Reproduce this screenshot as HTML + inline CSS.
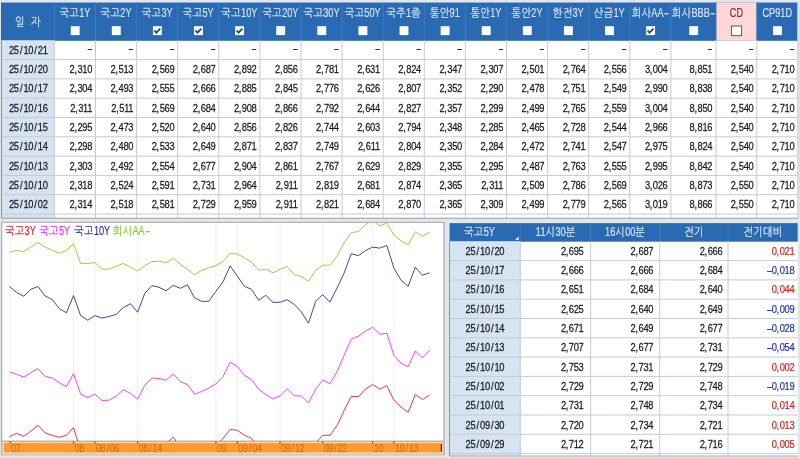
<!DOCTYPE html>
<html lang="ko"><head><meta charset="utf-8"><title>금리 추이</title>
<style>
html,body{margin:0;padding:0;background:#e3e5e8;overflow:hidden}
body{width:800px;height:458px}
svg{display:block;font-family:"Liberation Sans", "NanumGothic", "Noto Sans CJK KR", sans-serif;will-change:transform}
.h{font-size:11.6px;fill:#d4e3f6;stroke:#d4e3f6;stroke-width:.2px;text-anchor:middle;letter-spacing:0.3px}
.hcd{font-size:11.6px;fill:#6e3b3b;text-anchor:middle;letter-spacing:0.3px}
.d{font-size:11.7px;fill:#1a1a1a;stroke:#1a1a1a;stroke-width:.25px;text-anchor:middle;letter-spacing:-0.4px}
.n{font-size:11.7px;fill:#1a1a1a;stroke:#1a1a1a;stroke-width:.25px;text-anchor:end;letter-spacing:-0.4px}
.nr{font-size:11.7px;fill:#c8201c;stroke:#c8201c;stroke-width:.2px;text-anchor:end;letter-spacing:-0.4px}
.nb{font-size:11.7px;fill:#1c2ea8;stroke:#1c2ea8;stroke-width:.2px;text-anchor:end;letter-spacing:-0.4px}
.lt{letter-spacing:0;font-size:12.4px}
.hcd{stroke:#6e3b3b;stroke-width:.2px}
.lg{font-size:11.6px;letter-spacing:0.3px}
.lg tspan{stroke-width:.15px}
.ax{font-size:11.3px;fill:#c8700f;letter-spacing:-0.4px}
</style></head><body>
<svg width="800" height="458" viewBox="0 0 800 458">
<rect x="0.00" y="0.00" width="800.00" height="458.00" fill="#e3e5e8" />
<rect x="1.00" y="2.50" width="799.00" height="215.70" fill="#dde0e9" />
<rect x="1.00" y="2.50" width="796.70" height="215.70" fill="#ffffff" />
<rect x="1.00" y="2.50" width="796.70" height="38.30" fill="#2a6ab2" />
<rect x="716.00" y="2.50" width="40.80" height="38.30" fill="#ffd7d7" />
<rect x="1.00" y="40.30" width="53.40" height="177.90" fill="#d6e3f0" />
<line x1="54.40" y1="2.50" x2="54.40" y2="40.30" stroke="#3d79bd" stroke-width="1" />
<line x1="95.50" y1="2.50" x2="95.50" y2="40.30" stroke="#3d79bd" stroke-width="1" />
<line x1="136.60" y1="2.50" x2="136.60" y2="40.30" stroke="#3d79bd" stroke-width="1" />
<line x1="177.70" y1="2.50" x2="177.70" y2="40.30" stroke="#3d79bd" stroke-width="1" />
<line x1="218.80" y1="2.50" x2="218.80" y2="40.30" stroke="#3d79bd" stroke-width="1" />
<line x1="259.90" y1="2.50" x2="259.90" y2="40.30" stroke="#3d79bd" stroke-width="1" />
<line x1="301.00" y1="2.50" x2="301.00" y2="40.30" stroke="#3d79bd" stroke-width="1" />
<line x1="342.10" y1="2.50" x2="342.10" y2="40.30" stroke="#3d79bd" stroke-width="1" />
<line x1="383.20" y1="2.50" x2="383.20" y2="40.30" stroke="#3d79bd" stroke-width="1" />
<line x1="424.30" y1="2.50" x2="424.30" y2="40.30" stroke="#3d79bd" stroke-width="1" />
<line x1="465.40" y1="2.50" x2="465.40" y2="40.30" stroke="#3d79bd" stroke-width="1" />
<line x1="506.50" y1="2.50" x2="506.50" y2="40.30" stroke="#3d79bd" stroke-width="1" />
<line x1="547.60" y1="2.50" x2="547.60" y2="40.30" stroke="#3d79bd" stroke-width="1" />
<line x1="588.70" y1="2.50" x2="588.70" y2="40.30" stroke="#3d79bd" stroke-width="1" />
<line x1="629.80" y1="2.50" x2="629.80" y2="40.30" stroke="#3d79bd" stroke-width="1" />
<line x1="670.90" y1="2.50" x2="670.90" y2="40.30" stroke="#3d79bd" stroke-width="1" />
<line x1="716.00" y1="2.50" x2="716.00" y2="40.30" stroke="#3d79bd" stroke-width="1" />
<line x1="756.80" y1="2.50" x2="756.80" y2="40.30" stroke="#3d79bd" stroke-width="1" />
<line x1="54.40" y1="40.30" x2="54.40" y2="218.20" stroke="#c2ccd8" stroke-width="1" />
<line x1="95.50" y1="40.30" x2="95.50" y2="218.20" stroke="#c2ccd8" stroke-width="1" />
<line x1="136.60" y1="40.30" x2="136.60" y2="218.20" stroke="#c2ccd8" stroke-width="1" />
<line x1="177.70" y1="40.30" x2="177.70" y2="218.20" stroke="#c2ccd8" stroke-width="1" />
<line x1="218.80" y1="40.30" x2="218.80" y2="218.20" stroke="#c2ccd8" stroke-width="1" />
<line x1="259.90" y1="40.30" x2="259.90" y2="218.20" stroke="#c2ccd8" stroke-width="1" />
<line x1="301.00" y1="40.30" x2="301.00" y2="218.20" stroke="#c2ccd8" stroke-width="1" />
<line x1="342.10" y1="40.30" x2="342.10" y2="218.20" stroke="#c2ccd8" stroke-width="1" />
<line x1="383.20" y1="40.30" x2="383.20" y2="218.20" stroke="#c2ccd8" stroke-width="1" />
<line x1="424.30" y1="40.30" x2="424.30" y2="218.20" stroke="#c2ccd8" stroke-width="1" />
<line x1="465.40" y1="40.30" x2="465.40" y2="218.20" stroke="#c2ccd8" stroke-width="1" />
<line x1="506.50" y1="40.30" x2="506.50" y2="218.20" stroke="#c2ccd8" stroke-width="1" />
<line x1="547.60" y1="40.30" x2="547.60" y2="218.20" stroke="#c2ccd8" stroke-width="1" />
<line x1="588.70" y1="40.30" x2="588.70" y2="218.20" stroke="#c2ccd8" stroke-width="1" />
<line x1="629.80" y1="40.30" x2="629.80" y2="218.20" stroke="#c2ccd8" stroke-width="1" />
<line x1="670.90" y1="40.30" x2="670.90" y2="218.20" stroke="#c2ccd8" stroke-width="1" />
<line x1="716.00" y1="40.30" x2="716.00" y2="218.20" stroke="#c2ccd8" stroke-width="1" />
<line x1="756.80" y1="40.30" x2="756.80" y2="218.20" stroke="#c2ccd8" stroke-width="1" />
<line x1="1.00" y1="59.60" x2="797.70" y2="59.60" stroke="#c2ccd8" stroke-width="1" />
<line x1="1.00" y1="78.90" x2="797.70" y2="78.90" stroke="#c2ccd8" stroke-width="1" />
<line x1="1.00" y1="98.20" x2="797.70" y2="98.20" stroke="#c2ccd8" stroke-width="1" />
<line x1="1.00" y1="117.50" x2="797.70" y2="117.50" stroke="#c2ccd8" stroke-width="1" />
<line x1="1.00" y1="136.80" x2="797.70" y2="136.80" stroke="#c2ccd8" stroke-width="1" />
<line x1="1.00" y1="156.10" x2="797.70" y2="156.10" stroke="#c2ccd8" stroke-width="1" />
<line x1="1.00" y1="175.40" x2="797.70" y2="175.40" stroke="#c2ccd8" stroke-width="1" />
<line x1="1.00" y1="194.70" x2="797.70" y2="194.70" stroke="#c2ccd8" stroke-width="1" />
<line x1="1.00" y1="214.00" x2="797.70" y2="214.00" stroke="#c2ccd8" stroke-width="1" />
<line x1="1.00" y1="218.20" x2="797.70" y2="218.20" stroke="#98a0aa" stroke-width="1" />
<line x1="1.50" y1="40.30" x2="1.50" y2="218.20" stroke="#8c949e" stroke-width="1" />
<line x1="797.70" y1="2.50" x2="797.70" y2="218.20" stroke="#c9d3df" stroke-width="1" />
<text transform="translate(28.00 25.60) scale(0.88 1)" class="h">일&#160;&#160;자</text>
<text transform="translate(74.95 16.70) scale(0.88 1)" class="h">국고<tspan class="lt" textLength="12.74" lengthAdjust="spacingAndGlyphs">1Y</tspan></text>
<rect x="70.75" y="26.20" width="8.90" height="8.90" fill="#ffffff" />
<text transform="translate(116.05 16.70) scale(0.88 1)" class="h">국고<tspan class="lt" textLength="12.74" lengthAdjust="spacingAndGlyphs">2Y</tspan></text>
<rect x="111.85" y="26.20" width="8.90" height="8.90" fill="#ffffff" />
<text transform="translate(157.15 16.70) scale(0.88 1)" class="h">국고<tspan class="lt" textLength="12.74" lengthAdjust="spacingAndGlyphs">3Y</tspan></text>
<rect x="152.95" y="26.20" width="8.90" height="8.90" fill="#ffffff" />
<path d="M154.35 30.50 L156.35 32.60 L160.25 28.60" fill="none" stroke="#2a4373" stroke-width="1.8"/>
<text transform="translate(198.25 16.70) scale(0.88 1)" class="h">국고<tspan class="lt" textLength="12.74" lengthAdjust="spacingAndGlyphs">5Y</tspan></text>
<rect x="194.05" y="26.20" width="8.90" height="8.90" fill="#ffffff" />
<path d="M195.45 30.50 L197.45 32.60 L201.35 28.60" fill="none" stroke="#2a4373" stroke-width="1.8"/>
<text transform="translate(239.35 16.70) scale(0.88 1)" class="h">국고<tspan class="lt" textLength="18.53" lengthAdjust="spacingAndGlyphs">10Y</tspan></text>
<rect x="235.15" y="26.20" width="8.90" height="8.90" fill="#ffffff" />
<path d="M236.55 30.50 L238.55 32.60 L242.45 28.60" fill="none" stroke="#2a4373" stroke-width="1.8"/>
<text transform="translate(280.45 16.70) scale(0.88 1)" class="h">국고<tspan class="lt" textLength="18.53" lengthAdjust="spacingAndGlyphs">20Y</tspan></text>
<rect x="276.25" y="26.20" width="8.90" height="8.90" fill="#ffffff" />
<text transform="translate(321.55 16.70) scale(0.88 1)" class="h">국고<tspan class="lt" textLength="18.53" lengthAdjust="spacingAndGlyphs">30Y</tspan></text>
<rect x="317.35" y="26.20" width="8.90" height="8.90" fill="#ffffff" />
<text transform="translate(362.65 16.70) scale(0.88 1)" class="h">국고<tspan class="lt" textLength="18.53" lengthAdjust="spacingAndGlyphs">50Y</tspan></text>
<rect x="358.45" y="26.20" width="8.90" height="8.90" fill="#ffffff" />
<text transform="translate(403.75 16.70) scale(0.88 1)" class="h">국주<tspan class="lt" textLength="5.79" lengthAdjust="spacingAndGlyphs">1</tspan>종</text>
<rect x="399.55" y="26.20" width="8.90" height="8.90" fill="#ffffff" />
<text transform="translate(444.85 16.70) scale(0.88 1)" class="h">통안<tspan class="lt" textLength="11.58" lengthAdjust="spacingAndGlyphs">91</tspan></text>
<rect x="440.65" y="26.20" width="8.90" height="8.90" fill="#ffffff" />
<text transform="translate(485.95 16.70) scale(0.88 1)" class="h">통안<tspan class="lt" textLength="12.74" lengthAdjust="spacingAndGlyphs">1Y</tspan></text>
<rect x="481.75" y="26.20" width="8.90" height="8.90" fill="#ffffff" />
<text transform="translate(527.05 16.70) scale(0.88 1)" class="h">통안<tspan class="lt" textLength="12.74" lengthAdjust="spacingAndGlyphs">2Y</tspan></text>
<rect x="522.85" y="26.20" width="8.90" height="8.90" fill="#ffffff" />
<text transform="translate(568.15 16.70) scale(0.88 1)" class="h">한전<tspan class="lt" textLength="12.74" lengthAdjust="spacingAndGlyphs">3Y</tspan></text>
<rect x="563.95" y="26.20" width="8.90" height="8.90" fill="#ffffff" />
<text transform="translate(609.25 16.70) scale(0.88 1)" class="h">산금<tspan class="lt" textLength="12.74" lengthAdjust="spacingAndGlyphs">1Y</tspan></text>
<rect x="605.05" y="26.20" width="8.90" height="8.90" fill="#ffffff" />
<text transform="translate(650.35 16.70) scale(0.88 1)" class="h">회사<tspan class="lt" textLength="13.89" lengthAdjust="spacingAndGlyphs">AA</tspan><tspan class="lt" dx="0.6" textLength="5.6" lengthAdjust="spacingAndGlyphs">-</tspan></text>
<rect x="646.15" y="26.20" width="8.90" height="8.90" fill="#ffffff" />
<path d="M647.55 30.50 L649.55 32.60 L653.45 28.60" fill="none" stroke="#2a4373" stroke-width="1.8"/>
<text transform="translate(693.45 16.70) scale(0.88 1)" class="h">회사<tspan class="lt" textLength="20.84" lengthAdjust="spacingAndGlyphs">BBB</tspan><tspan class="lt" dx="0.6" textLength="5.6" lengthAdjust="spacingAndGlyphs">-</tspan></text>
<rect x="689.25" y="26.20" width="8.90" height="8.90" fill="#ffffff" />
<text transform="translate(736.40 16.70) scale(0.88 1)" class="hcd"><tspan class="lt" textLength="15.04" lengthAdjust="spacingAndGlyphs">CD</tspan></text>
<rect x="731.50" y="26.00" width="10.00" height="9.60" fill="#ffffff" stroke="#56657c" stroke-width="1.1"/>
<text transform="translate(777.25 16.70) scale(0.88 1)" class="h"><tspan class="lt" textLength="33.57" lengthAdjust="spacingAndGlyphs">CP91D</tspan></text>
<rect x="773.05" y="26.20" width="8.90" height="8.90" fill="#ffffff" />
<text transform="translate(28.30 53.80) scale(0.8 1)" class="d">25<tspan dx="1.5">/</tspan><tspan dx="1.5">10</tspan><tspan dx="1.5">/</tspan><tspan dx="1.5">21</tspan></text>
<text transform="translate(91.90 51.80) scale(1.35 1)" class="n">-</text>
<text transform="translate(133.00 51.80) scale(1.35 1)" class="n">-</text>
<text transform="translate(174.10 51.80) scale(1.35 1)" class="n">-</text>
<text transform="translate(215.20 51.80) scale(1.35 1)" class="n">-</text>
<text transform="translate(256.30 51.80) scale(1.35 1)" class="n">-</text>
<text transform="translate(297.40 51.80) scale(1.35 1)" class="n">-</text>
<text transform="translate(338.50 51.80) scale(1.35 1)" class="n">-</text>
<text transform="translate(379.60 51.80) scale(1.35 1)" class="n">-</text>
<text transform="translate(420.70 51.80) scale(1.35 1)" class="n">-</text>
<text transform="translate(461.80 51.80) scale(1.35 1)" class="n">-</text>
<text transform="translate(502.90 51.80) scale(1.35 1)" class="n">-</text>
<text transform="translate(544.00 51.80) scale(1.35 1)" class="n">-</text>
<text transform="translate(585.10 51.80) scale(1.35 1)" class="n">-</text>
<text transform="translate(626.20 51.80) scale(1.35 1)" class="n">-</text>
<text transform="translate(667.30 51.80) scale(1.35 1)" class="n">-</text>
<text transform="translate(712.00 51.80) scale(1.35 1)" class="n">-</text>
<text transform="translate(753.20 51.80) scale(1.35 1)" class="n">-</text>
<text transform="translate(794.10 51.80) scale(1.35 1)" class="n">-</text>
<text transform="translate(28.30 73.10) scale(0.8 1)" class="d">25<tspan dx="1.5">/</tspan><tspan dx="1.5">10</tspan><tspan dx="1.5">/</tspan><tspan dx="1.5">20</tspan></text>
<text transform="translate(92.10 73.10) scale(0.8 1)" class="n">2,<tspan dx="1.0">310</tspan></text>
<text transform="translate(133.20 73.10) scale(0.8 1)" class="n">2,<tspan dx="1.0">513</tspan></text>
<text transform="translate(174.30 73.10) scale(0.8 1)" class="n">2,<tspan dx="1.0">569</tspan></text>
<text transform="translate(215.40 73.10) scale(0.8 1)" class="n">2,<tspan dx="1.0">687</tspan></text>
<text transform="translate(256.50 73.10) scale(0.8 1)" class="n">2,<tspan dx="1.0">892</tspan></text>
<text transform="translate(297.60 73.10) scale(0.8 1)" class="n">2,<tspan dx="1.0">856</tspan></text>
<text transform="translate(338.70 73.10) scale(0.8 1)" class="n">2,<tspan dx="1.0">781</tspan></text>
<text transform="translate(379.80 73.10) scale(0.8 1)" class="n">2,<tspan dx="1.0">631</tspan></text>
<text transform="translate(420.90 73.10) scale(0.8 1)" class="n">2,<tspan dx="1.0">824</tspan></text>
<text transform="translate(462.00 73.10) scale(0.8 1)" class="n">2,<tspan dx="1.0">347</tspan></text>
<text transform="translate(503.10 73.10) scale(0.8 1)" class="n">2,<tspan dx="1.0">307</tspan></text>
<text transform="translate(544.20 73.10) scale(0.8 1)" class="n">2,<tspan dx="1.0">501</tspan></text>
<text transform="translate(585.30 73.10) scale(0.8 1)" class="n">2,<tspan dx="1.0">764</tspan></text>
<text transform="translate(626.40 73.10) scale(0.8 1)" class="n">2,<tspan dx="1.0">556</tspan></text>
<text transform="translate(667.50 73.10) scale(0.8 1)" class="n">3,<tspan dx="1.0">004</tspan></text>
<text transform="translate(712.20 73.10) scale(0.8 1)" class="n">8,<tspan dx="1.0">851</tspan></text>
<text transform="translate(753.40 73.10) scale(0.8 1)" class="n">2,<tspan dx="1.0">540</tspan></text>
<text transform="translate(794.30 73.10) scale(0.8 1)" class="n">2,<tspan dx="1.0">710</tspan></text>
<text transform="translate(28.30 92.40) scale(0.8 1)" class="d">25<tspan dx="1.5">/</tspan><tspan dx="1.5">10</tspan><tspan dx="1.5">/</tspan><tspan dx="1.5">17</tspan></text>
<text transform="translate(92.10 92.40) scale(0.8 1)" class="n">2,<tspan dx="1.0">304</tspan></text>
<text transform="translate(133.20 92.40) scale(0.8 1)" class="n">2,<tspan dx="1.0">493</tspan></text>
<text transform="translate(174.30 92.40) scale(0.8 1)" class="n">2,<tspan dx="1.0">555</tspan></text>
<text transform="translate(215.40 92.40) scale(0.8 1)" class="n">2,<tspan dx="1.0">666</tspan></text>
<text transform="translate(256.50 92.40) scale(0.8 1)" class="n">2,<tspan dx="1.0">885</tspan></text>
<text transform="translate(297.60 92.40) scale(0.8 1)" class="n">2,<tspan dx="1.0">845</tspan></text>
<text transform="translate(338.70 92.40) scale(0.8 1)" class="n">2,<tspan dx="1.0">776</tspan></text>
<text transform="translate(379.80 92.40) scale(0.8 1)" class="n">2,<tspan dx="1.0">626</tspan></text>
<text transform="translate(420.90 92.40) scale(0.8 1)" class="n">2,<tspan dx="1.0">807</tspan></text>
<text transform="translate(462.00 92.40) scale(0.8 1)" class="n">2,<tspan dx="1.0">352</tspan></text>
<text transform="translate(503.10 92.40) scale(0.8 1)" class="n">2,<tspan dx="1.0">290</tspan></text>
<text transform="translate(544.20 92.40) scale(0.8 1)" class="n">2,<tspan dx="1.0">478</tspan></text>
<text transform="translate(585.30 92.40) scale(0.8 1)" class="n">2,<tspan dx="1.0">751</tspan></text>
<text transform="translate(626.40 92.40) scale(0.8 1)" class="n">2,<tspan dx="1.0">549</tspan></text>
<text transform="translate(667.50 92.40) scale(0.8 1)" class="n">2,<tspan dx="1.0">990</tspan></text>
<text transform="translate(712.20 92.40) scale(0.8 1)" class="n">8,<tspan dx="1.0">838</tspan></text>
<text transform="translate(753.40 92.40) scale(0.8 1)" class="n">2,<tspan dx="1.0">540</tspan></text>
<text transform="translate(794.30 92.40) scale(0.8 1)" class="n">2,<tspan dx="1.0">710</tspan></text>
<text transform="translate(28.30 111.70) scale(0.8 1)" class="d">25<tspan dx="1.5">/</tspan><tspan dx="1.5">10</tspan><tspan dx="1.5">/</tspan><tspan dx="1.5">16</tspan></text>
<text transform="translate(92.10 111.70) scale(0.8 1)" class="n">2,<tspan dx="1.0">311</tspan></text>
<text transform="translate(133.20 111.70) scale(0.8 1)" class="n">2,<tspan dx="1.0">511</tspan></text>
<text transform="translate(174.30 111.70) scale(0.8 1)" class="n">2,<tspan dx="1.0">569</tspan></text>
<text transform="translate(215.40 111.70) scale(0.8 1)" class="n">2,<tspan dx="1.0">684</tspan></text>
<text transform="translate(256.50 111.70) scale(0.8 1)" class="n">2,<tspan dx="1.0">908</tspan></text>
<text transform="translate(297.60 111.70) scale(0.8 1)" class="n">2,<tspan dx="1.0">866</tspan></text>
<text transform="translate(338.70 111.70) scale(0.8 1)" class="n">2,<tspan dx="1.0">792</tspan></text>
<text transform="translate(379.80 111.70) scale(0.8 1)" class="n">2,<tspan dx="1.0">644</tspan></text>
<text transform="translate(420.90 111.70) scale(0.8 1)" class="n">2,<tspan dx="1.0">827</tspan></text>
<text transform="translate(462.00 111.70) scale(0.8 1)" class="n">2,<tspan dx="1.0">357</tspan></text>
<text transform="translate(503.10 111.70) scale(0.8 1)" class="n">2,<tspan dx="1.0">299</tspan></text>
<text transform="translate(544.20 111.70) scale(0.8 1)" class="n">2,<tspan dx="1.0">499</tspan></text>
<text transform="translate(585.30 111.70) scale(0.8 1)" class="n">2,<tspan dx="1.0">765</tspan></text>
<text transform="translate(626.40 111.70) scale(0.8 1)" class="n">2,<tspan dx="1.0">559</tspan></text>
<text transform="translate(667.50 111.70) scale(0.8 1)" class="n">3,<tspan dx="1.0">004</tspan></text>
<text transform="translate(712.20 111.70) scale(0.8 1)" class="n">8,<tspan dx="1.0">850</tspan></text>
<text transform="translate(753.40 111.70) scale(0.8 1)" class="n">2,<tspan dx="1.0">540</tspan></text>
<text transform="translate(794.30 111.70) scale(0.8 1)" class="n">2,<tspan dx="1.0">710</tspan></text>
<text transform="translate(28.30 131.00) scale(0.8 1)" class="d">25<tspan dx="1.5">/</tspan><tspan dx="1.5">10</tspan><tspan dx="1.5">/</tspan><tspan dx="1.5">15</tspan></text>
<text transform="translate(92.10 131.00) scale(0.8 1)" class="n">2,<tspan dx="1.0">295</tspan></text>
<text transform="translate(133.20 131.00) scale(0.8 1)" class="n">2,<tspan dx="1.0">473</tspan></text>
<text transform="translate(174.30 131.00) scale(0.8 1)" class="n">2,<tspan dx="1.0">520</tspan></text>
<text transform="translate(215.40 131.00) scale(0.8 1)" class="n">2,<tspan dx="1.0">640</tspan></text>
<text transform="translate(256.50 131.00) scale(0.8 1)" class="n">2,<tspan dx="1.0">856</tspan></text>
<text transform="translate(297.60 131.00) scale(0.8 1)" class="n">2,<tspan dx="1.0">826</tspan></text>
<text transform="translate(338.70 131.00) scale(0.8 1)" class="n">2,<tspan dx="1.0">744</tspan></text>
<text transform="translate(379.80 131.00) scale(0.8 1)" class="n">2,<tspan dx="1.0">603</tspan></text>
<text transform="translate(420.90 131.00) scale(0.8 1)" class="n">2,<tspan dx="1.0">794</tspan></text>
<text transform="translate(462.00 131.00) scale(0.8 1)" class="n">2,<tspan dx="1.0">348</tspan></text>
<text transform="translate(503.10 131.00) scale(0.8 1)" class="n">2,<tspan dx="1.0">285</tspan></text>
<text transform="translate(544.20 131.00) scale(0.8 1)" class="n">2,<tspan dx="1.0">465</tspan></text>
<text transform="translate(585.30 131.00) scale(0.8 1)" class="n">2,<tspan dx="1.0">728</tspan></text>
<text transform="translate(626.40 131.00) scale(0.8 1)" class="n">2,<tspan dx="1.0">544</tspan></text>
<text transform="translate(667.50 131.00) scale(0.8 1)" class="n">2,<tspan dx="1.0">966</tspan></text>
<text transform="translate(712.20 131.00) scale(0.8 1)" class="n">8,<tspan dx="1.0">816</tspan></text>
<text transform="translate(753.40 131.00) scale(0.8 1)" class="n">2,<tspan dx="1.0">540</tspan></text>
<text transform="translate(794.30 131.00) scale(0.8 1)" class="n">2,<tspan dx="1.0">710</tspan></text>
<text transform="translate(28.30 150.30) scale(0.8 1)" class="d">25<tspan dx="1.5">/</tspan><tspan dx="1.5">10</tspan><tspan dx="1.5">/</tspan><tspan dx="1.5">14</tspan></text>
<text transform="translate(92.10 150.30) scale(0.8 1)" class="n">2,<tspan dx="1.0">298</tspan></text>
<text transform="translate(133.20 150.30) scale(0.8 1)" class="n">2,<tspan dx="1.0">480</tspan></text>
<text transform="translate(174.30 150.30) scale(0.8 1)" class="n">2,<tspan dx="1.0">533</tspan></text>
<text transform="translate(215.40 150.30) scale(0.8 1)" class="n">2,<tspan dx="1.0">649</tspan></text>
<text transform="translate(256.50 150.30) scale(0.8 1)" class="n">2,<tspan dx="1.0">871</tspan></text>
<text transform="translate(297.60 150.30) scale(0.8 1)" class="n">2,<tspan dx="1.0">837</tspan></text>
<text transform="translate(338.70 150.30) scale(0.8 1)" class="n">2,<tspan dx="1.0">749</tspan></text>
<text transform="translate(379.80 150.30) scale(0.8 1)" class="n">2,<tspan dx="1.0">611</tspan></text>
<text transform="translate(420.90 150.30) scale(0.8 1)" class="n">2,<tspan dx="1.0">804</tspan></text>
<text transform="translate(462.00 150.30) scale(0.8 1)" class="n">2,<tspan dx="1.0">350</tspan></text>
<text transform="translate(503.10 150.30) scale(0.8 1)" class="n">2,<tspan dx="1.0">284</tspan></text>
<text transform="translate(544.20 150.30) scale(0.8 1)" class="n">2,<tspan dx="1.0">472</tspan></text>
<text transform="translate(585.30 150.30) scale(0.8 1)" class="n">2,<tspan dx="1.0">741</tspan></text>
<text transform="translate(626.40 150.30) scale(0.8 1)" class="n">2,<tspan dx="1.0">547</tspan></text>
<text transform="translate(667.50 150.30) scale(0.8 1)" class="n">2,<tspan dx="1.0">975</tspan></text>
<text transform="translate(712.20 150.30) scale(0.8 1)" class="n">8,<tspan dx="1.0">824</tspan></text>
<text transform="translate(753.40 150.30) scale(0.8 1)" class="n">2,<tspan dx="1.0">540</tspan></text>
<text transform="translate(794.30 150.30) scale(0.8 1)" class="n">2,<tspan dx="1.0">710</tspan></text>
<text transform="translate(28.30 169.60) scale(0.8 1)" class="d">25<tspan dx="1.5">/</tspan><tspan dx="1.5">10</tspan><tspan dx="1.5">/</tspan><tspan dx="1.5">13</tspan></text>
<text transform="translate(92.10 169.60) scale(0.8 1)" class="n">2,<tspan dx="1.0">303</tspan></text>
<text transform="translate(133.20 169.60) scale(0.8 1)" class="n">2,<tspan dx="1.0">492</tspan></text>
<text transform="translate(174.30 169.60) scale(0.8 1)" class="n">2,<tspan dx="1.0">554</tspan></text>
<text transform="translate(215.40 169.60) scale(0.8 1)" class="n">2,<tspan dx="1.0">677</tspan></text>
<text transform="translate(256.50 169.60) scale(0.8 1)" class="n">2,<tspan dx="1.0">904</tspan></text>
<text transform="translate(297.60 169.60) scale(0.8 1)" class="n">2,<tspan dx="1.0">861</tspan></text>
<text transform="translate(338.70 169.60) scale(0.8 1)" class="n">2,<tspan dx="1.0">767</tspan></text>
<text transform="translate(379.80 169.60) scale(0.8 1)" class="n">2,<tspan dx="1.0">629</tspan></text>
<text transform="translate(420.90 169.60) scale(0.8 1)" class="n">2,<tspan dx="1.0">829</tspan></text>
<text transform="translate(462.00 169.60) scale(0.8 1)" class="n">2,<tspan dx="1.0">355</tspan></text>
<text transform="translate(503.10 169.60) scale(0.8 1)" class="n">2,<tspan dx="1.0">295</tspan></text>
<text transform="translate(544.20 169.60) scale(0.8 1)" class="n">2,<tspan dx="1.0">487</tspan></text>
<text transform="translate(585.30 169.60) scale(0.8 1)" class="n">2,<tspan dx="1.0">763</tspan></text>
<text transform="translate(626.40 169.60) scale(0.8 1)" class="n">2,<tspan dx="1.0">555</tspan></text>
<text transform="translate(667.50 169.60) scale(0.8 1)" class="n">2,<tspan dx="1.0">995</tspan></text>
<text transform="translate(712.20 169.60) scale(0.8 1)" class="n">8,<tspan dx="1.0">842</tspan></text>
<text transform="translate(753.40 169.60) scale(0.8 1)" class="n">2,<tspan dx="1.0">540</tspan></text>
<text transform="translate(794.30 169.60) scale(0.8 1)" class="n">2,<tspan dx="1.0">710</tspan></text>
<text transform="translate(28.30 188.90) scale(0.8 1)" class="d">25<tspan dx="1.5">/</tspan><tspan dx="1.5">10</tspan><tspan dx="1.5">/</tspan><tspan dx="1.5">10</tspan></text>
<text transform="translate(92.10 188.90) scale(0.8 1)" class="n">2,<tspan dx="1.0">318</tspan></text>
<text transform="translate(133.20 188.90) scale(0.8 1)" class="n">2,<tspan dx="1.0">524</tspan></text>
<text transform="translate(174.30 188.90) scale(0.8 1)" class="n">2,<tspan dx="1.0">591</tspan></text>
<text transform="translate(215.40 188.90) scale(0.8 1)" class="n">2,<tspan dx="1.0">731</tspan></text>
<text transform="translate(256.50 188.90) scale(0.8 1)" class="n">2,<tspan dx="1.0">964</tspan></text>
<text transform="translate(297.60 188.90) scale(0.8 1)" class="n">2,<tspan dx="1.0">911</tspan></text>
<text transform="translate(338.70 188.90) scale(0.8 1)" class="n">2,<tspan dx="1.0">819</tspan></text>
<text transform="translate(379.80 188.90) scale(0.8 1)" class="n">2,<tspan dx="1.0">681</tspan></text>
<text transform="translate(420.90 188.90) scale(0.8 1)" class="n">2,<tspan dx="1.0">874</tspan></text>
<text transform="translate(462.00 188.90) scale(0.8 1)" class="n">2,<tspan dx="1.0">365</tspan></text>
<text transform="translate(503.10 188.90) scale(0.8 1)" class="n">2,<tspan dx="1.0">311</tspan></text>
<text transform="translate(544.20 188.90) scale(0.8 1)" class="n">2,<tspan dx="1.0">509</tspan></text>
<text transform="translate(585.30 188.90) scale(0.8 1)" class="n">2,<tspan dx="1.0">786</tspan></text>
<text transform="translate(626.40 188.90) scale(0.8 1)" class="n">2,<tspan dx="1.0">569</tspan></text>
<text transform="translate(667.50 188.90) scale(0.8 1)" class="n">3,<tspan dx="1.0">026</tspan></text>
<text transform="translate(712.20 188.90) scale(0.8 1)" class="n">8,<tspan dx="1.0">873</tspan></text>
<text transform="translate(753.40 188.90) scale(0.8 1)" class="n">2,<tspan dx="1.0">550</tspan></text>
<text transform="translate(794.30 188.90) scale(0.8 1)" class="n">2,<tspan dx="1.0">710</tspan></text>
<text transform="translate(28.30 208.20) scale(0.8 1)" class="d">25<tspan dx="1.5">/</tspan><tspan dx="1.5">10</tspan><tspan dx="1.5">/</tspan><tspan dx="1.5">02</tspan></text>
<text transform="translate(92.10 208.20) scale(0.8 1)" class="n">2,<tspan dx="1.0">314</tspan></text>
<text transform="translate(133.20 208.20) scale(0.8 1)" class="n">2,<tspan dx="1.0">518</tspan></text>
<text transform="translate(174.30 208.20) scale(0.8 1)" class="n">2,<tspan dx="1.0">581</tspan></text>
<text transform="translate(215.40 208.20) scale(0.8 1)" class="n">2,<tspan dx="1.0">729</tspan></text>
<text transform="translate(256.50 208.20) scale(0.8 1)" class="n">2,<tspan dx="1.0">959</tspan></text>
<text transform="translate(297.60 208.20) scale(0.8 1)" class="n">2,<tspan dx="1.0">911</tspan></text>
<text transform="translate(338.70 208.20) scale(0.8 1)" class="n">2,<tspan dx="1.0">821</tspan></text>
<text transform="translate(379.80 208.20) scale(0.8 1)" class="n">2,<tspan dx="1.0">684</tspan></text>
<text transform="translate(420.90 208.20) scale(0.8 1)" class="n">2,<tspan dx="1.0">870</tspan></text>
<text transform="translate(462.00 208.20) scale(0.8 1)" class="n">2,<tspan dx="1.0">365</tspan></text>
<text transform="translate(503.10 208.20) scale(0.8 1)" class="n">2,<tspan dx="1.0">309</tspan></text>
<text transform="translate(544.20 208.20) scale(0.8 1)" class="n">2,<tspan dx="1.0">499</tspan></text>
<text transform="translate(585.30 208.20) scale(0.8 1)" class="n">2,<tspan dx="1.0">779</tspan></text>
<text transform="translate(626.40 208.20) scale(0.8 1)" class="n">2,<tspan dx="1.0">565</tspan></text>
<text transform="translate(667.50 208.20) scale(0.8 1)" class="n">3,<tspan dx="1.0">019</tspan></text>
<text transform="translate(712.20 208.20) scale(0.8 1)" class="n">8,<tspan dx="1.0">866</tspan></text>
<text transform="translate(753.40 208.20) scale(0.8 1)" class="n">2,<tspan dx="1.0">550</tspan></text>
<text transform="translate(794.30 208.20) scale(0.8 1)" class="n">2,<tspan dx="1.0">710</tspan></text>
<rect x="1.00" y="221.90" width="443.70" height="233.40" fill="#adb2b9" />
<rect x="2.30" y="223.00" width="441.00" height="218.00" fill="#ffffff" />
<rect x="2.30" y="441.60" width="441.00" height="12.90" fill="#ffd9a6" />
<rect x="4.00" y="443.10" width="438.10" height="9.30" fill="#ff9a33" />
<line x1="2.30" y1="441.10" x2="443.30" y2="441.10" stroke="#a9a9a9" stroke-width="1" />
<clipPath id="cp"><rect x="2.30" y="223.00" width="441.00" height="218.00"/></clipPath>
<line x1="10.15" y1="223.00" x2="10.15" y2="441.00" stroke="#f0f0f3" stroke-width="1" />
<line x1="10.15" y1="441.00" x2="10.15" y2="443.60" stroke="#5a4a3a" stroke-width="1" />
<text transform="translate(11.05 451.90) scale(0.8 1)" class="ax">07</text>
<line x1="73.53" y1="223.00" x2="73.53" y2="441.00" stroke="#f0f0f3" stroke-width="1" />
<line x1="73.53" y1="441.00" x2="73.53" y2="443.60" stroke="#5a4a3a" stroke-width="1" />
<text transform="translate(74.43 451.90) scale(0.8 1)" class="ax">08</text>
<line x1="94.89" y1="223.00" x2="94.89" y2="441.00" stroke="#f0f0f3" stroke-width="1" />
<line x1="94.89" y1="441.00" x2="94.89" y2="443.60" stroke="#5a4a3a" stroke-width="1" />
<text transform="translate(95.79 451.90) scale(0.8 1)" class="ax">08<tspan dx="1.5">/</tspan><tspan dx="1.5">06</tspan></text>
<line x1="137.61" y1="223.00" x2="137.61" y2="441.00" stroke="#f0f0f3" stroke-width="1" />
<line x1="137.61" y1="441.00" x2="137.61" y2="443.60" stroke="#5a4a3a" stroke-width="1" />
<text transform="translate(138.51 451.90) scale(0.8 1)" class="ax">08<tspan dx="1.5">/</tspan><tspan dx="1.5">14</tspan></text>
<line x1="215.93" y1="223.00" x2="215.93" y2="441.00" stroke="#f0f0f3" stroke-width="1" />
<line x1="215.93" y1="441.00" x2="215.93" y2="443.60" stroke="#5a4a3a" stroke-width="1" />
<text transform="translate(216.83 451.90) scale(0.8 1)" class="ax">09</text>
<line x1="237.29" y1="223.00" x2="237.29" y2="441.00" stroke="#f0f0f3" stroke-width="1" />
<line x1="237.29" y1="441.00" x2="237.29" y2="443.60" stroke="#5a4a3a" stroke-width="1" />
<text transform="translate(238.19 451.90) scale(0.8 1)" class="ax">09<tspan dx="1.5">/</tspan><tspan dx="1.5">04</tspan></text>
<line x1="280.01" y1="223.00" x2="280.01" y2="441.00" stroke="#f0f0f3" stroke-width="1" />
<line x1="280.01" y1="441.00" x2="280.01" y2="443.60" stroke="#5a4a3a" stroke-width="1" />
<text transform="translate(280.91 451.90) scale(0.8 1)" class="ax">09<tspan dx="1.5">/</tspan><tspan dx="1.5">12</tspan></text>
<line x1="322.73" y1="223.00" x2="322.73" y2="441.00" stroke="#f0f0f3" stroke-width="1" />
<line x1="322.73" y1="441.00" x2="322.73" y2="443.60" stroke="#5a4a3a" stroke-width="1" />
<text transform="translate(323.63 451.90) scale(0.8 1)" class="ax">09<tspan dx="1.5">/</tspan><tspan dx="1.5">22</tspan></text>
<line x1="372.57" y1="223.00" x2="372.57" y2="441.00" stroke="#f0f0f3" stroke-width="1" />
<line x1="372.57" y1="441.00" x2="372.57" y2="443.60" stroke="#5a4a3a" stroke-width="1" />
<text transform="translate(373.47 451.90) scale(0.8 1)" class="ax">10</text>
<line x1="393.93" y1="223.00" x2="393.93" y2="441.00" stroke="#f0f0f3" stroke-width="1" />
<line x1="393.93" y1="441.00" x2="393.93" y2="443.60" stroke="#5a4a3a" stroke-width="1" />
<text transform="translate(394.83 451.90) scale(0.8 1)" class="ax">10<tspan dx="1.5">/</tspan><tspan dx="1.5">13</tspan></text>
<rect x="440.80" y="444.00" width="1.00" height="7.60" fill="#1e0c02" />
<polyline points="9.45,252.10 16.57,250.50 23.69,251.50 30.81,246.80 37.93,242.50 45.05,247.10 52.17,250.10 59.29,253.30 66.41,250.50 73.53,243.70 80.65,263.40 87.77,263.40 94.89,262.60 102.01,269.20 109.13,269.20 116.25,266.20 123.37,263.40 130.49,267.20 137.61,271.00 144.73,265.80 151.85,261.60 158.97,261.20 166.09,262.60 173.21,258.20 180.33,264.20 187.45,269.20 194.57,274.80 201.69,270.20 208.81,267.80 215.93,265.60 223.05,261.60 230.17,253.10 237.29,254.10 244.41,257.60 251.53,262.20 258.65,270.20 265.77,269.20 272.89,272.80 280.01,269.20 287.13,266.60 294.25,274.70 301.37,276.70 308.49,281.30 315.61,270.20 322.73,265.20 329.85,265.20 336.97,256.20 344.09,243.10 351.21,232.90 358.33,231.50 365.45,224.80 372.57,220.50 379.69,226.00 386.81,223.20 393.93,234.90 401.05,240.80 408.17,244.90 415.29,231.80 422.41,236.40 429.53,232.30" fill="none" stroke="#8fce3c" stroke-width="0.95" stroke-linejoin="round" clip-path="url(#cp)"/>
<polyline points="9.45,286.50 16.57,292.50 23.69,296.20 30.81,289.40 37.93,286.50 45.05,296.00 52.17,299.50 59.29,308.50 66.41,312.80 73.53,295.60 80.65,315.60 87.77,320.30 94.89,315.60 102.01,318.10 109.13,316.40 116.25,314.40 123.37,307.50 130.49,303.70 137.61,312.20 144.73,293.50 151.85,285.60 158.97,287.20 166.09,290.90 173.21,285.30 180.33,288.30 187.45,284.80 194.57,297.90 201.69,301.30 208.81,301.30 215.93,291.30 223.05,281.80 230.17,265.80 237.29,276.20 244.41,286.30 251.53,289.30 258.65,300.30 265.77,295.30 272.89,302.30 280.01,302.30 287.13,299.70 294.25,304.40 301.37,312.00 308.49,323.20 315.61,301.40 322.73,294.70 329.85,302.20 336.97,288.10 344.09,273.20 351.21,253.80 358.33,255.60 365.45,250.70 372.57,247.10 379.69,248.10 386.81,245.50 393.93,268.20 401.05,280.30 408.17,286.30 415.29,267.20 422.41,275.20 429.53,272.80" fill="none" stroke="#3b3a8c" stroke-width="0.95" stroke-linejoin="round" clip-path="url(#cp)"/>
<polyline points="9.45,372.00 16.57,374.40 23.69,377.00 30.81,372.60 37.93,368.60 45.05,376.40 52.17,378.00 59.29,382.70 66.41,386.70 73.53,373.60 80.65,394.10 87.77,397.50 94.89,394.10 102.01,400.50 109.13,400.10 116.25,396.10 123.37,389.50 130.49,393.50 137.61,399.10 144.73,385.50 151.85,378.00 158.97,378.50 166.09,380.10 173.21,373.80 180.33,381.70 187.45,384.70 194.57,394.20 201.69,391.40 208.81,388.00 215.93,384.00 223.05,376.60 230.17,362.20 237.29,366.40 244.41,375.30 251.53,379.60 258.65,389.20 265.77,394.70 272.89,398.60 280.01,395.80 287.13,388.70 294.25,395.70 301.37,396.00 308.49,402.90 315.61,389.10 322.73,380.10 329.85,383.70 336.97,372.00 344.09,355.30 351.21,339.20 358.33,336.20 365.45,331.20 372.57,327.20 379.69,334.20 386.81,333.20 393.93,355.30 401.05,363.30 408.17,366.70 415.29,350.90 422.41,357.90 429.53,350.30" fill="none" stroke="#f03cf0" stroke-width="0.95" stroke-linejoin="round" clip-path="url(#cp)"/>
<polyline points="9.45,436.70 16.57,433.30 23.69,436.30 30.81,431.30 37.93,425.20 45.05,432.90 52.17,435.30 59.29,437.30 66.41,435.30 73.53,427.60 80.65,450.70 87.77,452.00 94.89,451.00 102.01,456.00 109.13,456.00 116.25,453.00 123.37,448.00 130.49,451.00 137.61,456.00 144.73,446.00 151.85,442.00 158.97,442.50 166.09,443.90 173.21,436.90 180.33,447.70 187.45,450.00 194.57,456.00 201.69,453.00 208.81,451.00 215.93,447.30 223.05,438.30 230.17,429.30 237.29,430.30 244.41,435.30 251.53,438.30 258.65,449.70 265.77,452.00 272.89,455.00 280.01,452.00 287.13,447.00 294.25,452.00 301.37,452.00 308.49,458.00 315.61,443.30 322.73,435.30 329.85,435.30 336.97,425.60 344.09,410.60 351.21,396.50 358.33,396.70 365.45,389.10 372.57,384.50 379.69,389.10 386.81,385.70 393.93,400.10 401.05,407.20 408.17,412.20 415.29,394.50 422.41,399.50 429.53,395.10" fill="none" stroke="#cf3340" stroke-width="0.95" stroke-linejoin="round" clip-path="url(#cp)"/>
<text transform="translate(0 235.3) scale(0.88 1)" class="lg"><tspan x="5.57" fill="#c8242c" stroke="#c8242c">국고<tspan class="lt" textLength="12.74" lengthAdjust="spacingAndGlyphs">3Y</tspan></tspan> <tspan x="44.55" fill="#ee33ee" stroke="#ee33ee">국고<tspan class="lt" textLength="12.74" lengthAdjust="spacingAndGlyphs">5Y</tspan></tspan> <tspan x="84.32" fill="#2d2d80" stroke="#2d2d80">국고<tspan class="lt" textLength="18.53" lengthAdjust="spacingAndGlyphs">10Y</tspan></tspan> <tspan x="128.18" fill="#86c83a" stroke="#86c83a">회사<tspan class="lt" textLength="13.89" lengthAdjust="spacingAndGlyphs">AA</tspan><tspan class="lt" dx="0.6" textLength="5.6" lengthAdjust="spacingAndGlyphs">-</tspan></tspan></text>
<rect x="449.50" y="223.10" width="348.20" height="232.90" fill="#ffffff" />
<rect x="449.50" y="223.10" width="348.20" height="18.60" fill="#2a6ab2" />
<rect x="449.50" y="241.30" width="70.80" height="214.70" fill="#d6e3f0" />
<line x1="520.30" y1="223.10" x2="520.30" y2="241.30" stroke="#3d79bd" stroke-width="1" />
<line x1="520.30" y1="241.30" x2="520.30" y2="456.00" stroke="#c2ccd8" stroke-width="1" />
<line x1="590.60" y1="223.10" x2="590.60" y2="241.30" stroke="#3d79bd" stroke-width="1" />
<line x1="590.60" y1="241.30" x2="590.60" y2="456.00" stroke="#c2ccd8" stroke-width="1" />
<line x1="659.70" y1="223.10" x2="659.70" y2="241.30" stroke="#3d79bd" stroke-width="1" />
<line x1="659.70" y1="241.30" x2="659.70" y2="456.00" stroke="#c2ccd8" stroke-width="1" />
<line x1="728.00" y1="223.10" x2="728.00" y2="241.30" stroke="#3d79bd" stroke-width="1" />
<line x1="728.00" y1="241.30" x2="728.00" y2="456.00" stroke="#c2ccd8" stroke-width="1" />
<line x1="449.50" y1="260.60" x2="797.70" y2="260.60" stroke="#c2ccd8" stroke-width="1" />
<line x1="449.50" y1="279.90" x2="797.70" y2="279.90" stroke="#c2ccd8" stroke-width="1" />
<line x1="449.50" y1="299.20" x2="797.70" y2="299.20" stroke="#c2ccd8" stroke-width="1" />
<line x1="449.50" y1="318.50" x2="797.70" y2="318.50" stroke="#c2ccd8" stroke-width="1" />
<line x1="449.50" y1="337.80" x2="797.70" y2="337.80" stroke="#c2ccd8" stroke-width="1" />
<line x1="449.50" y1="357.10" x2="797.70" y2="357.10" stroke="#c2ccd8" stroke-width="1" />
<line x1="449.50" y1="376.40" x2="797.70" y2="376.40" stroke="#c2ccd8" stroke-width="1" />
<line x1="449.50" y1="395.70" x2="797.70" y2="395.70" stroke="#c2ccd8" stroke-width="1" />
<line x1="449.50" y1="415.00" x2="797.70" y2="415.00" stroke="#c2ccd8" stroke-width="1" />
<line x1="449.50" y1="434.30" x2="797.70" y2="434.30" stroke="#c2ccd8" stroke-width="1" />
<line x1="449.50" y1="453.60" x2="797.70" y2="453.60" stroke="#c2ccd8" stroke-width="1" />
<line x1="449.50" y1="241.30" x2="449.50" y2="456.00" stroke="#8c96a2" stroke-width="1" />
<line x1="449.50" y1="456.00" x2="797.70" y2="456.00" stroke="#a4acb6" stroke-width="1" />
<text transform="translate(479.40 236.30) scale(0.88 1)" class="h">국고<tspan class="lt" textLength="12.74" lengthAdjust="spacingAndGlyphs">5Y</tspan></text>
<text transform="translate(555.45 236.30) scale(0.88 1)" class="h"><tspan class="lt" textLength="11.58" lengthAdjust="spacingAndGlyphs">11</tspan>시<tspan class="lt" textLength="11.58" lengthAdjust="spacingAndGlyphs">30</tspan>분</text>
<text transform="translate(625.15 236.30) scale(0.88 1)" class="h"><tspan class="lt" textLength="11.58" lengthAdjust="spacingAndGlyphs">16</tspan>시<tspan class="lt" textLength="11.58" lengthAdjust="spacingAndGlyphs">00</tspan>분</text>
<text transform="translate(693.85 236.30) scale(0.88 1)" class="h">전기</text>
<text transform="translate(762.85 236.30) scale(0.88 1)" class="h">전기대비</text>
<path d="M518.70 239.90 L515.10 239.90 L518.70 236.30 Z" fill="#e9f1fb"/>
<text transform="translate(484.90 254.80) scale(0.8 1)" class="d">25<tspan dx="1.5">/</tspan><tspan dx="1.5">10</tspan><tspan dx="1.5">/</tspan><tspan dx="1.5">20</tspan></text>
<text transform="translate(583.50 254.80) scale(0.8 1)" class="n">2,<tspan dx="1.0">695</tspan></text>
<text transform="translate(653.20 254.80) scale(0.8 1)" class="n">2,<tspan dx="1.0">687</tspan></text>
<text transform="translate(722.30 254.80) scale(0.8 1)" class="n">2,<tspan dx="1.0">666</tspan></text>
<text transform="translate(794.30 254.80) scale(0.8 1)" class="nr">0,<tspan dx="1.0">021</tspan></text>
<text transform="translate(484.90 274.10) scale(0.8 1)" class="d">25<tspan dx="1.5">/</tspan><tspan dx="1.5">10</tspan><tspan dx="1.5">/</tspan><tspan dx="1.5">17</tspan></text>
<text transform="translate(583.50 274.10) scale(0.8 1)" class="n">2,<tspan dx="1.0">666</tspan></text>
<text transform="translate(653.20 274.10) scale(0.8 1)" class="n">2,<tspan dx="1.0">666</tspan></text>
<text transform="translate(722.30 274.10) scale(0.8 1)" class="n">2,<tspan dx="1.0">684</tspan></text>
<text transform="translate(794.30 274.10) scale(0.8 1)" class="nb"><tspan textLength="6.6" lengthAdjust="spacingAndGlyphs">-</tspan>0,<tspan dx="1.0">018</tspan></text>
<text transform="translate(484.90 293.40) scale(0.8 1)" class="d">25<tspan dx="1.5">/</tspan><tspan dx="1.5">10</tspan><tspan dx="1.5">/</tspan><tspan dx="1.5">16</tspan></text>
<text transform="translate(583.50 293.40) scale(0.8 1)" class="n">2,<tspan dx="1.0">651</tspan></text>
<text transform="translate(653.20 293.40) scale(0.8 1)" class="n">2,<tspan dx="1.0">684</tspan></text>
<text transform="translate(722.30 293.40) scale(0.8 1)" class="n">2,<tspan dx="1.0">640</tspan></text>
<text transform="translate(794.30 293.40) scale(0.8 1)" class="nr">0,<tspan dx="1.0">044</tspan></text>
<text transform="translate(484.90 312.70) scale(0.8 1)" class="d">25<tspan dx="1.5">/</tspan><tspan dx="1.5">10</tspan><tspan dx="1.5">/</tspan><tspan dx="1.5">15</tspan></text>
<text transform="translate(583.50 312.70) scale(0.8 1)" class="n">2,<tspan dx="1.0">625</tspan></text>
<text transform="translate(653.20 312.70) scale(0.8 1)" class="n">2,<tspan dx="1.0">640</tspan></text>
<text transform="translate(722.30 312.70) scale(0.8 1)" class="n">2,<tspan dx="1.0">649</tspan></text>
<text transform="translate(794.30 312.70) scale(0.8 1)" class="nb"><tspan textLength="6.6" lengthAdjust="spacingAndGlyphs">-</tspan>0,<tspan dx="1.0">009</tspan></text>
<text transform="translate(484.90 332.00) scale(0.8 1)" class="d">25<tspan dx="1.5">/</tspan><tspan dx="1.5">10</tspan><tspan dx="1.5">/</tspan><tspan dx="1.5">14</tspan></text>
<text transform="translate(583.50 332.00) scale(0.8 1)" class="n">2,<tspan dx="1.0">671</tspan></text>
<text transform="translate(653.20 332.00) scale(0.8 1)" class="n">2,<tspan dx="1.0">649</tspan></text>
<text transform="translate(722.30 332.00) scale(0.8 1)" class="n">2,<tspan dx="1.0">677</tspan></text>
<text transform="translate(794.30 332.00) scale(0.8 1)" class="nb"><tspan textLength="6.6" lengthAdjust="spacingAndGlyphs">-</tspan>0,<tspan dx="1.0">028</tspan></text>
<text transform="translate(484.90 351.30) scale(0.8 1)" class="d">25<tspan dx="1.5">/</tspan><tspan dx="1.5">10</tspan><tspan dx="1.5">/</tspan><tspan dx="1.5">13</tspan></text>
<text transform="translate(583.50 351.30) scale(0.8 1)" class="n">2,<tspan dx="1.0">707</tspan></text>
<text transform="translate(653.20 351.30) scale(0.8 1)" class="n">2,<tspan dx="1.0">677</tspan></text>
<text transform="translate(722.30 351.30) scale(0.8 1)" class="n">2,<tspan dx="1.0">731</tspan></text>
<text transform="translate(794.30 351.30) scale(0.8 1)" class="nb"><tspan textLength="6.6" lengthAdjust="spacingAndGlyphs">-</tspan>0,<tspan dx="1.0">054</tspan></text>
<text transform="translate(484.90 370.60) scale(0.8 1)" class="d">25<tspan dx="1.5">/</tspan><tspan dx="1.5">10</tspan><tspan dx="1.5">/</tspan><tspan dx="1.5">10</tspan></text>
<text transform="translate(583.50 370.60) scale(0.8 1)" class="n">2,<tspan dx="1.0">753</tspan></text>
<text transform="translate(653.20 370.60) scale(0.8 1)" class="n">2,<tspan dx="1.0">731</tspan></text>
<text transform="translate(722.30 370.60) scale(0.8 1)" class="n">2,<tspan dx="1.0">729</tspan></text>
<text transform="translate(794.30 370.60) scale(0.8 1)" class="nr">0,<tspan dx="1.0">002</tspan></text>
<text transform="translate(484.90 389.90) scale(0.8 1)" class="d">25<tspan dx="1.5">/</tspan><tspan dx="1.5">10</tspan><tspan dx="1.5">/</tspan><tspan dx="1.5">02</tspan></text>
<text transform="translate(583.50 389.90) scale(0.8 1)" class="n">2,<tspan dx="1.0">729</tspan></text>
<text transform="translate(653.20 389.90) scale(0.8 1)" class="n">2,<tspan dx="1.0">729</tspan></text>
<text transform="translate(722.30 389.90) scale(0.8 1)" class="n">2,<tspan dx="1.0">748</tspan></text>
<text transform="translate(794.30 389.90) scale(0.8 1)" class="nb"><tspan textLength="6.6" lengthAdjust="spacingAndGlyphs">-</tspan>0,<tspan dx="1.0">019</tspan></text>
<text transform="translate(484.90 409.20) scale(0.8 1)" class="d">25<tspan dx="1.5">/</tspan><tspan dx="1.5">10</tspan><tspan dx="1.5">/</tspan><tspan dx="1.5">01</tspan></text>
<text transform="translate(583.50 409.20) scale(0.8 1)" class="n">2,<tspan dx="1.0">731</tspan></text>
<text transform="translate(653.20 409.20) scale(0.8 1)" class="n">2,<tspan dx="1.0">748</tspan></text>
<text transform="translate(722.30 409.20) scale(0.8 1)" class="n">2,<tspan dx="1.0">734</tspan></text>
<text transform="translate(794.30 409.20) scale(0.8 1)" class="nr">0,<tspan dx="1.0">014</tspan></text>
<text transform="translate(484.90 428.50) scale(0.8 1)" class="d">25<tspan dx="1.5">/</tspan><tspan dx="1.5">09</tspan><tspan dx="1.5">/</tspan><tspan dx="1.5">30</tspan></text>
<text transform="translate(583.50 428.50) scale(0.8 1)" class="n">2,<tspan dx="1.0">720</tspan></text>
<text transform="translate(653.20 428.50) scale(0.8 1)" class="n">2,<tspan dx="1.0">734</tspan></text>
<text transform="translate(722.30 428.50) scale(0.8 1)" class="n">2,<tspan dx="1.0">721</tspan></text>
<text transform="translate(794.30 428.50) scale(0.8 1)" class="nr">0,<tspan dx="1.0">013</tspan></text>
<text transform="translate(484.90 447.80) scale(0.8 1)" class="d">25<tspan dx="1.5">/</tspan><tspan dx="1.5">09</tspan><tspan dx="1.5">/</tspan><tspan dx="1.5">29</tspan></text>
<text transform="translate(583.50 447.80) scale(0.8 1)" class="n">2,<tspan dx="1.0">712</tspan></text>
<text transform="translate(653.20 447.80) scale(0.8 1)" class="n">2,<tspan dx="1.0">721</tspan></text>
<text transform="translate(722.30 447.80) scale(0.8 1)" class="n">2,<tspan dx="1.0">716</tspan></text>
<text transform="translate(794.30 447.80) scale(0.8 1)" class="nr">0,<tspan dx="1.0">005</tspan></text>
</svg></body></html>
